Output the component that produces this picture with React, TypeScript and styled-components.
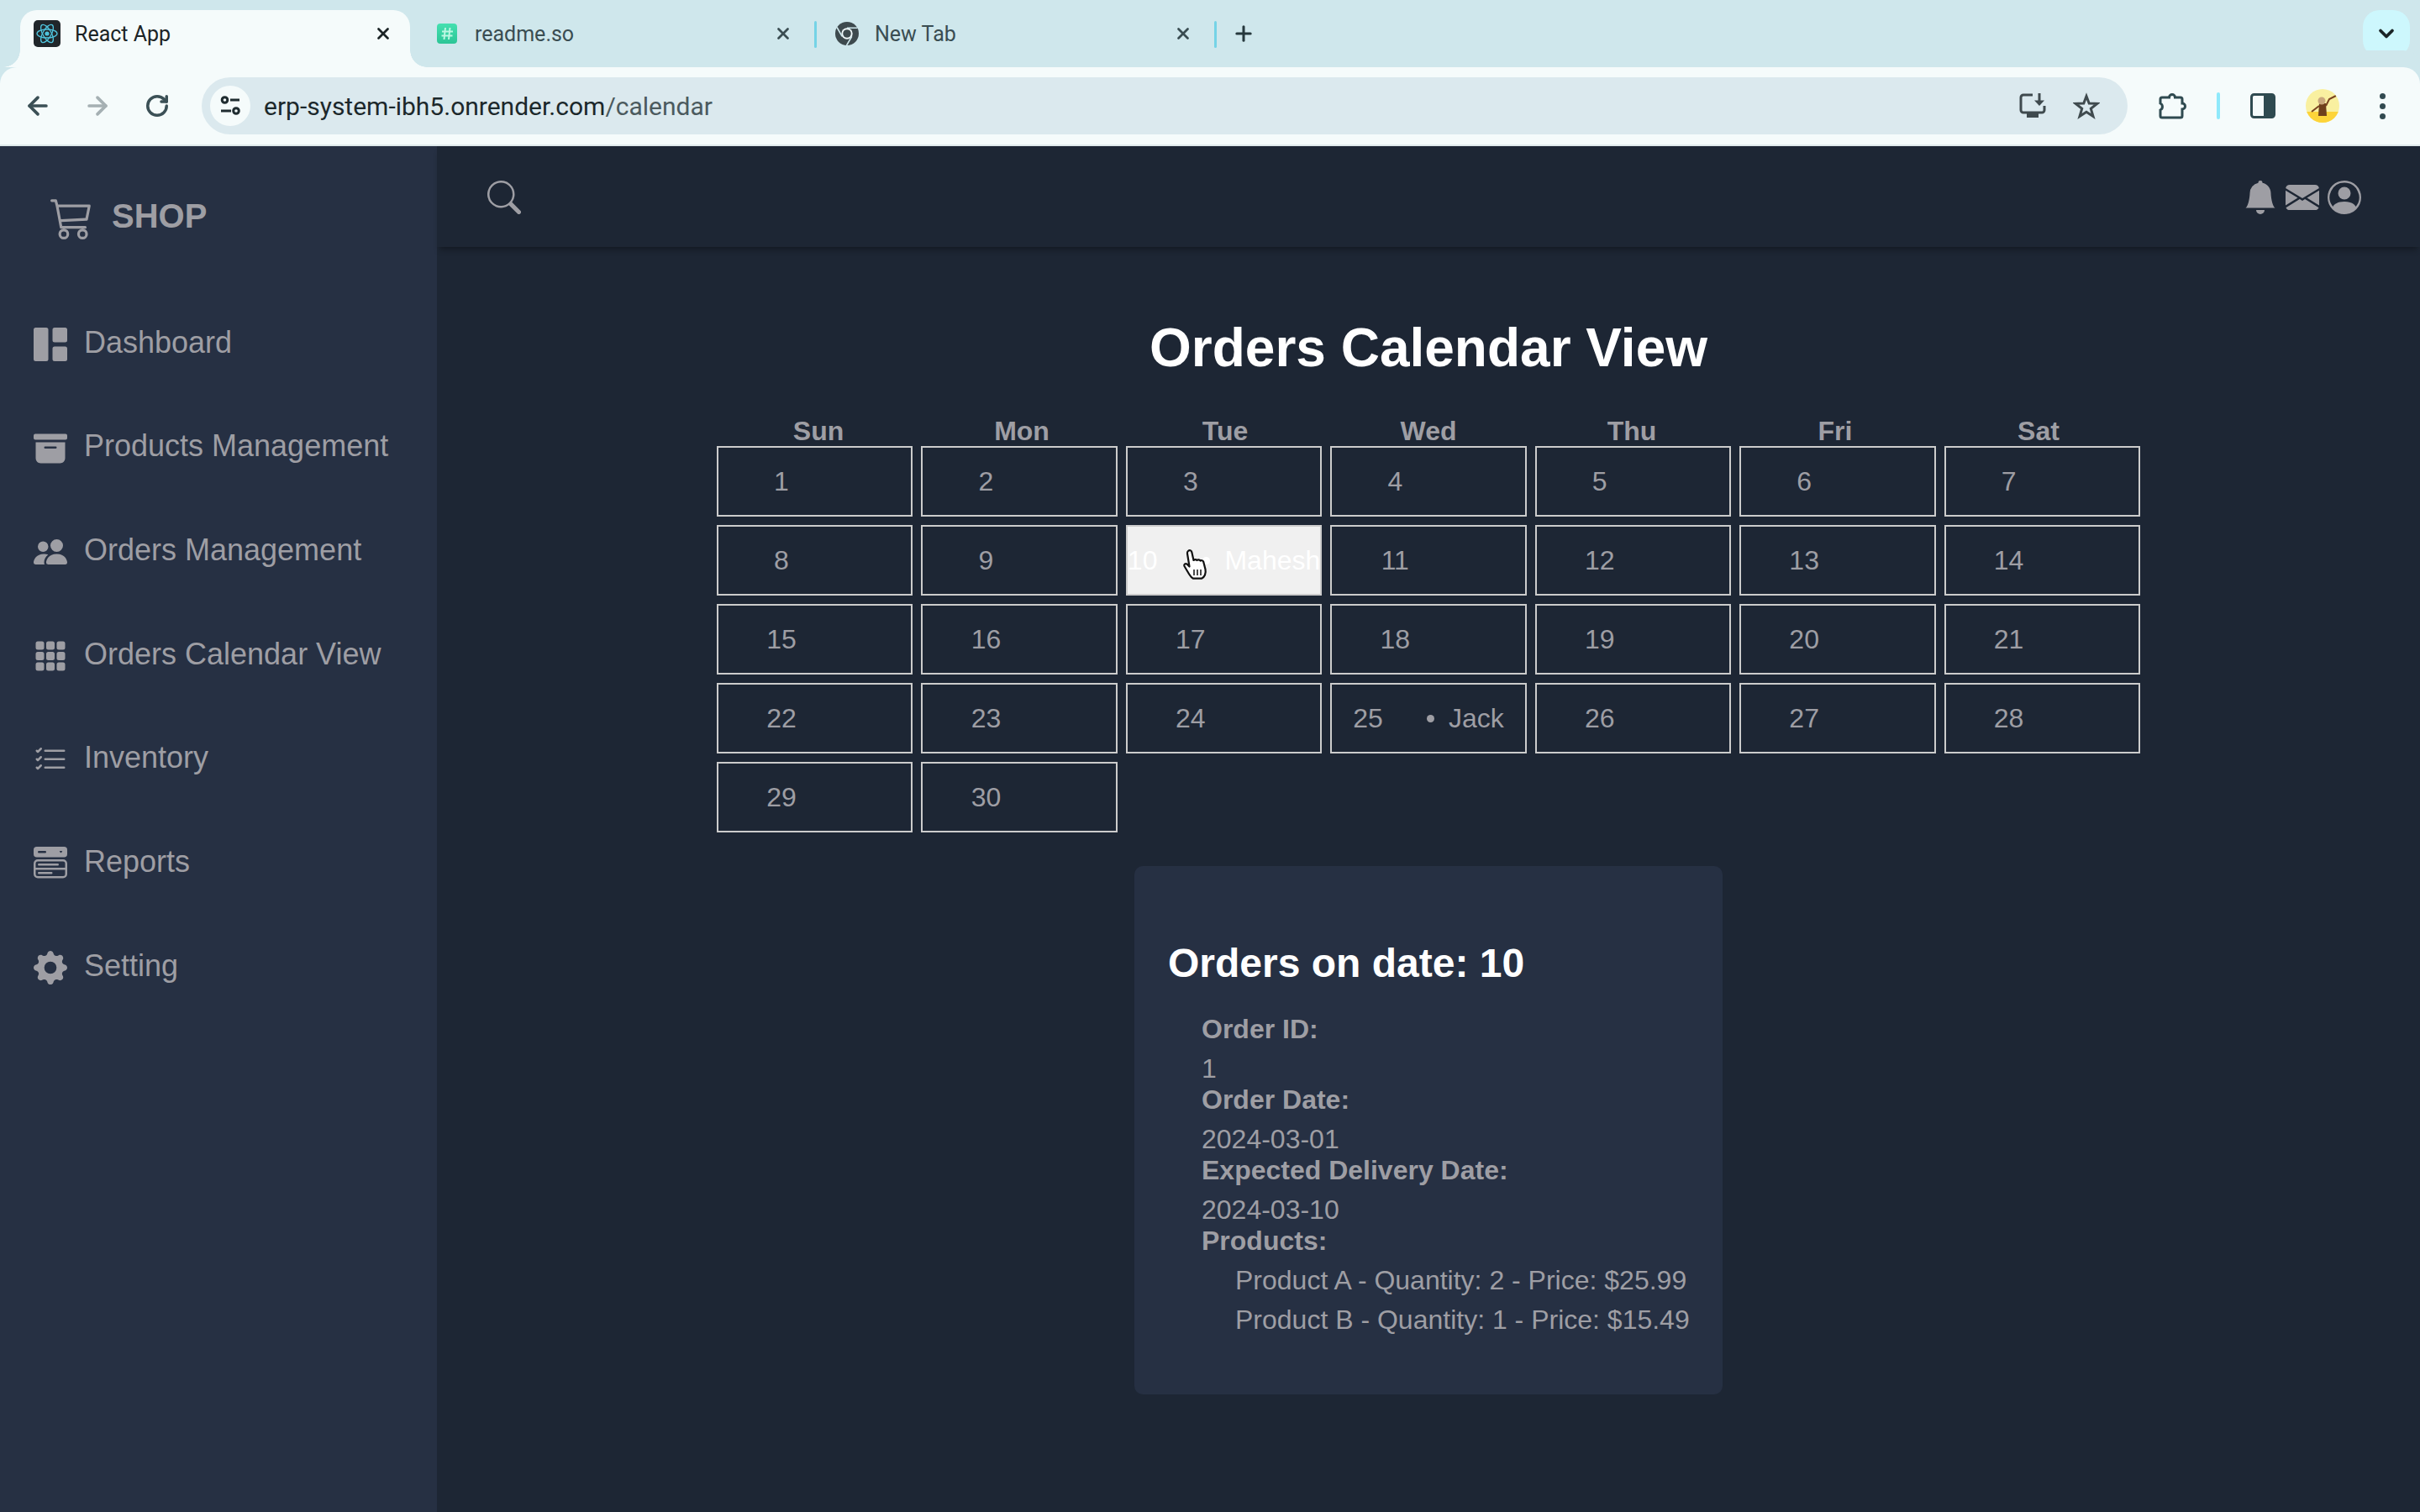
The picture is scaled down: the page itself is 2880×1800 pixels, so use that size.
import React from "react";
import styled, { createGlobalStyle } from "styled-components";
import { ArrowLeft, ArrowRight, RotateCw, X, Plus, ChevronDown } from "lucide-react";
import {
  BsCart3, BsGrid1X2Fill, BsFillArchiveFill, BsPeopleFill, BsFillGrid3X3GapFill,
  BsListCheck, BsMenuButtonWideFill, BsFillGearFill, BsSearch, BsFillBellFill,
  BsFillEnvelopeFill, BsPersonCircle,
} from "react-icons/bs";

const GlobalStyle = createGlobalStyle`
  html, body { margin: 0; padding: 0; background: #1d2634; }
  body { font-family: "Liberation Sans", Arial, sans-serif; color: #9e9ea4; }
  * { box-sizing: border-box; }
`;

const Shell = styled.div`
  width: 2880px;
  height: 1800px;
  display: flex;
  flex-direction: column;
  overflow: hidden;
`;

/* ---------- browser chrome ---------- */
const TabStrip = styled.div`
  height: 80px;
  flex: none;
  display: flex;
  padding: 12px 12px 0 24px;
  background: #cfe7ec;
`;
const Tab = styled.div<{ $active?: boolean }>`
  position: relative;
  width: 464px;
  flex: none;
  display: flex;
  align-items: center;
  padding: 0 0 12px 16px;
  border-radius: 20px 20px 0 0;
  font-family: Roboto, "Liberation Sans", sans-serif;
  font-size: 25px;
  color: ${(p) => (p.$active ? "#1b2426" : "#3a4d52")};
  background: ${(p) => (p.$active ? "#f5fbfb" : "transparent")};
  ${(p) =>
    p.$active &&
    `
    &::before, &::after {
      content: "";
      position: absolute;
      bottom: 0;
      width: 20px;
      height: 20px;
    }
    &::before { left: -20px; background: radial-gradient(circle at 0 0, #cfe7ec 19.5px, #f5fbfb 20px); }
    &::after { right: -20px; background: radial-gradient(circle at 100% 0, #cfe7ec 19.5px, #f5fbfb 20px); }
  `}
`;
const Favicon = styled.span`
  width: 32px;
  height: 32px;
  flex: none;
  display: flex;
  align-items: center;
  justify-content: center;
`;
const TabTitle = styled.span`
  margin-left: 17px;
  flex: 1;
`;
const TabClose = styled.span`
  position: absolute;
  left: 418px;
  top: 14px;
  width: 28px;
  height: 28px;
  display: flex;
  align-items: center;
  justify-content: center;
`;
const TabGap = styled.div<{ $bar?: boolean }>`
  width: 12px;
  flex: none;
  display: flex;
  justify-content: center;
  padding-top: 13px;
  &::before {
    content: "";
    display: ${(p) => (p.$bar ? "block" : "none")};
    width: 3px;
    height: 32px;
    border-radius: 2px;
    background: #75d3e6;
  }
`;
const NewTab = styled.span`
  width: 28px;
  height: 56px;
  margin-left: 14px;
  display: flex;
  align-items: center;
  justify-content: center;
  color: #26383d;
`;
const TabSearch = styled.span`
  margin-left: auto;
  width: 56px;
  height: 56px;
  border-radius: 20px;
  background: #cdf7fd;
  display: flex;
  align-items: center;
  justify-content: center;
  color: #1b2426;
`;
const Toolbar = styled.div`
  height: 94px;
  flex: none;
  display: flex;
  align-items: center;
  padding: 12px 0 12px 25px;
  background: #f5fbfb;
  border-bottom: 2px solid #dfe9eb;
  border-radius: 20px 20px 0 0;
  box-shadow: 0 -20px 0 0 #cfe7ec;
`;
const NavButton = styled.span<{ $disabled?: boolean }>`
  width: 40px;
  height: 40px;
  margin-right: 31px;
  display: flex;
  align-items: center;
  justify-content: center;
  color: ${(p) => (p.$disabled ? "#a5b0b3" : "#3b5056")};
`;
const Omnibox = styled.div`
  width: 2292px;
  height: 68px;
  flex: none;
  margin-left: 2px;
  display: flex;
  align-items: center;
  padding: 0 33px 0 10px;
  border-radius: 34px;
  background: #dbe9ee;
`;
const SiteInfo = styled.span`
  width: 48px;
  height: 48px;
  flex: none;
  border-radius: 50%;
  background: #f5fbfb;
  display: flex;
  align-items: center;
  justify-content: center;
`;
const Url = styled.span`
  margin-left: 16px;
  flex: 1;
  font-family: Roboto, "Liberation Sans", sans-serif;
  font-size: 30px;
  color: #1c282b;
  span { color: #4b5a5e; }
`;
const OmniIcons = styled.span`
  display: flex;
  align-items: center;
  gap: 32px;
`;
const ToolbarEnd = styled.div`
  display: flex;
  align-items: center;
  gap: 36px;
  padding-left: 36px;
`;
const ToolbarRule = styled.span`
  width: 4px;
  height: 32px;
  border-radius: 2px;
  background: #8ee9fb;
`;
const Dots = styled.span`
  margin-left: 12px;
  display: flex;
  flex-direction: column;
  gap: 5px;
  i {
    display: block;
    width: 7px;
    height: 7px;
    border-radius: 50%;
    background: #324a50;
  }
`;

/* ---------- page ---------- */
const Page = styled.div`
  flex: 1;
  min-height: 0;
  display: grid;
  grid-template-columns: 520px 1fr;
`;
const Sidebar = styled.aside`
  background: #263043;
`;
const Brand = styled.div`
  height: 172.5px;
  padding: 60px 0 0 60px;
  display: flex;
  align-items: flex-start;
  gap: 22px;
  font-size: 40px;
  font-weight: 700;
  line-height: 46px;
`;
const NavList = styled.ul`
  list-style: none;
  margin: 0;
  padding: 0;
`;
const NavItem = styled.li`
  height: 123.7px;
  padding: 40px 0 0 40px;
  font-size: 36px;
  line-height: 41px;
  white-space: nowrap;
  svg {
    vertical-align: middle;
    margin-right: 20px;
  }
`;
const Main = styled.main`
  min-width: 0;
  display: flex;
  flex-direction: column;
  align-items: center;
`;
const TopBar = styled.header`
  align-self: stretch;
  height: 120px;
  flex: none;
  display: flex;
  align-items: center;
  justify-content: space-between;
  padding: 2px 70px 0 60px;
  box-shadow: 0 6px 7px -3px rgba(0, 0, 0, 0.35);
`;
const TopIcons = styled.div`
  display: flex;
  gap: 10px;
`;
const Title = styled.h1`
  margin: 84px 0 46px;
  font-size: 64px;
  line-height: 72px;
  font-weight: 700;
  color: #fff;
`;
const WeekRow = styled.div`
  width: 1694px;
  display: grid;
  grid-template-columns: repeat(7, 1fr);
  text-align: center;
  font-size: 32px;
  font-weight: 700;
  line-height: 35px;
`;
const DayGrid = styled.div`
  width: 1694px;
  display: grid;
  grid-template-columns: repeat(7, 1fr);
  grid-auto-rows: 84px;
  gap: 10px;
`;
const DayCell = styled.div<{ $selected?: boolean; $inset?: number; $hasOrder?: boolean }>`
  display: flex;
  align-items: center;
  justify-content: ${(p) => (p.$hasOrder ? "space-between" : "flex-start")};
  padding: 0 ${(p) => (p.$hasOrder ? p.$inset ?? 0 : 0)}px 0 ${(p) => p.$inset ?? 53}px;
  border: 2px solid #ccc;
  font-size: 32px;
  white-space: nowrap;
  background: ${(p) => (p.$selected ? "#f0f0f0" : "transparent")};
  color: ${(p) => (p.$selected ? "#fff" : "#9e9ea4")};
`;
const DayNumber = styled.span<{ $plain?: boolean }>`
  min-width: ${(p) => (p.$plain ? "44px" : "0")};
  text-align: center;
`;
const OrderTag = styled.span`
  display: flex;
  align-items: center;
  gap: 17px;
  &::before {
    content: "";
    width: 9px;
    height: 9px;
    border-radius: 50%;
    background: currentColor;
  }
`;
const CursorMark = styled.svg`
  position: absolute;
  left: 1406px;
  top: 653px;
`;
const Panel = styled.section`
  width: 700px;
  height: 629px;
  margin-top: 40px;
  padding: 88px 40px 0;
  border-radius: 10px;
  background: #263043;
  font-size: 32px;
  line-height: 37px;
`;
const PanelTitle = styled.h3`
  margin: 0 0 33px;
  font-size: 48px;
  line-height: 55px;
  font-weight: 700;
  color: #fff;
`;
const Details = styled.div`
  padding-left: 40px;
`;
const Label = styled.div`
  font-weight: 700;
  margin-bottom: 10px;
`;
const ProductList = styled.div`
  padding-left: 40px;
  display: flex;
  flex-direction: column;
  gap: 10px;
  white-space: nowrap;
`;

const nav = [
  [BsGrid1X2Fill, "Dashboard"],
  [BsFillArchiveFill, "Products Management"],
  [BsPeopleFill, "Orders Management"],
  [BsFillGrid3X3GapFill, "Orders Calendar View"],
  [BsListCheck, "Inventory"],
  [BsMenuButtonWideFill, "Reports"],
  [BsFillGearFill, "Setting"],
] as const;

const week = ["Sun", "Mon", "Tue", "Wed", "Thu", "Fri", "Sat"];
const orders: Record<number, { name: string; inset: number }> = {
  10: { name: "Mahesh", inset: 0 },
  25: { name: "Jack", inset: 25 },
};
const details = [
  ["Order ID:", "1"],
  ["Order Date:", "2024-03-01"],
  ["Expected Delivery Date:", "2024-03-10"],
];

const ReactIcon = () => (
  <svg width="32" height="32" viewBox="0 0 32 32">
    <rect width="32" height="32" rx="5" fill="#20262a" />
    <g fill="none" stroke="#4fc3dc" strokeWidth="1.3">
      <ellipse cx="16" cy="16" rx="12" ry="5" />
      <ellipse cx="16" cy="16" rx="12" ry="5" transform="rotate(60 16 16)" />
      <ellipse cx="16" cy="16" rx="12" ry="5" transform="rotate(120 16 16)" />
    </g>
    <circle cx="16" cy="16" r="2.6" fill="#4fc3dc" />
  </svg>
);
const ReadmeIcon = () => (
  <svg width="24" height="24" viewBox="0 0 24 24">
    <defs>
      <linearGradient id="rd" x1="0" y1="0" x2="0" y2="1">
        <stop offset="0" stopColor="#45e0b0" />
        <stop offset="1" stopColor="#2cc596" />
      </linearGradient>
    </defs>
    <rect width="24" height="24" rx="4" fill="url(#rd)" />
    <g stroke="#bdf7e2" strokeWidth="2" fill="none">
      <path d="M10 5 8.500 19M15.500 5 14 19M6 9.500h13M5.500 14.500h13" />
    </g>
  </svg>
);
const ChromeIcon = () => (
  <svg width="30" height="30" viewBox="0 0 30 30">
    <circle cx="15" cy="15" r="14" fill="#3e4a4e" />
    <circle cx="15" cy="15" r="6.700" fill="#f0f8f9" />
    <circle cx="15" cy="15" r="4.800" fill="#3e4a4e" />
    <path d="M15 8.300h12.500M9.200 18.300 3 7.500M20.800 18.300 14.500 29" stroke="#cfe7ec" strokeWidth="1.600" fill="none" />
  </svg>
);
const TuneIcon = () => (
  <svg width="26" height="26" viewBox="0 0 26 26" fill="none" stroke="#1f2c30" strokeWidth="3">
    <circle cx="6.500" cy="6" r="3.300" />
    <path d="M13 6h11M2 19h12" />
    <circle cx="20" cy="19" r="3.300" />
  </svg>
);
const InstallIcon = () => (
  <svg width="32" height="30" viewBox="0 0 32 30" fill="none">
    <path d="M16 2H5a3 3 0 0 0-3 3v15a3 3 0 0 0 3 3h22a3 3 0 0 0 3-3v-5" stroke="#3f4a4e" strokeWidth="3" />
    <rect x="9" y="23" width="14" height="6" fill="#3f4a4e" />
    <path d="M24 0v11" stroke="#3f4a4e" strokeWidth="3" />
    <path d="M18 8.500h12L24 15z" fill="#3f4a4e" />
  </svg>
);
const StarIcon = () => (
  <svg width="32" height="32" viewBox="0 0 32 32">
    <path d="M16 4.500 19.200 13 29 13.300 21.300 19.300 24 28.500 16 23.200 8 28.500 10.700 19.300 3 13.300 12.800 13z" fill="none" stroke="#3f4a4e" strokeWidth="3" strokeLinejoin="miter" />
  </svg>
);
const PuzzleIcon = () => (
  <svg width="34" height="34" viewBox="0 0 34 34">
    <path
      d="M5 7h8.500a3.500 3.500 0 0 1 7 0H27a2 2 0 0 1 2 2v5a3.500 3.500 0 0 1 0 7v8a2 2 0 0 1-2 2H5a2 2 0 0 1-2-2v-7a4.500 4.500 0 0 0 0-8V9a2 2 0 0 1 2-2z"
      fill="none"
      stroke="#2f4a50"
      strokeWidth="3"
    />
  </svg>
);
const SidePanelIcon = () => (
  <svg width="30" height="30" viewBox="0 0 30 30">
    <rect x="1.500" y="1.500" width="27" height="27" rx="3" fill="#f5fbfb" stroke="#2f4a50" strokeWidth="3" />
    <path d="M16 1.500h9.500a3 3 0 0 1 3 3v21a3 3 0 0 1-3 3H16z" fill="#2f4a50" />
  </svg>
);
const AvatarIcon = () => (
  <svg width="40" height="40" viewBox="0 0 40 40">
    <clipPath id="av"><circle cx="20" cy="20" r="20" /></clipPath>
    <g clipPath="url(#av)">
      <rect width="40" height="40" fill="#f9f0a0" />
      <rect y="27" width="40" height="13" fill="#fdd43a" />
      <path d="M16 17h8l1 15h-10z" fill="#6f3f1c" />
      <path d="M7 27 16 20M24 20 28 12 36 8" stroke="#7a4420" strokeWidth="2" fill="none" />
      <circle cx="19" cy="14" r="4.500" fill="#c9a77c" />
    </g>
  </svg>
);
const HandCursor = () => (
  <CursorMark width="36" height="38" viewBox="0 0 36 38">
    <path
      d="M8 3c1.700-1.500 3.800-.8 4.300 1.200L14.500 14c1-1.200 3-1.200 4 0 1-1 3-1 4 .5 1.200-.8 3-.4 3.700 1.200l2.300 9c1 5-1 9.500-4.500 11H14c-2-1-3.500-3-5-5.500L3.500 21c-1-2 1-3.500 3-2.500l3 3L7 6c-.2-1.200.2-2.300 1-3z"
      fill="#fff"
      stroke="#111"
      strokeWidth="2.200"
      strokeLinejoin="round"
    />
    <path d="M15 25v7M19 25v7M23 25v7" stroke="#111" strokeWidth="1.500" />
  </CursorMark>
);

export default function App() {
  const days = Array.from({ length: 30 }, (_, i) => i + 1);
  return (
    <Shell>
      <GlobalStyle />
      <TabStrip>
        <Tab $active>
          <Favicon><ReactIcon /></Favicon>
          <TabTitle>React App</TabTitle>
          <TabClose><X size={22} strokeWidth={3} color="#1b2426" /></TabClose>
        </Tab>
        <TabGap />
        <Tab>
          <Favicon><ReadmeIcon /></Favicon>
          <TabTitle>readme.so</TabTitle>
          <TabClose><X size={22} strokeWidth={3} color="#3a4d52" /></TabClose>
        </Tab>
        <TabGap $bar />
        <Tab>
          <Favicon><ChromeIcon /></Favicon>
          <TabTitle>New Tab</TabTitle>
          <TabClose><X size={22} strokeWidth={3} color="#3a4d52" /></TabClose>
        </Tab>
        <TabGap $bar />
        <NewTab><Plus size={30} strokeWidth={2.6} /></NewTab>
        <TabSearch><ChevronDown size={28} strokeWidth={3.2} /></TabSearch>
      </TabStrip>
      <Toolbar>
        <NavButton><ArrowLeft size={34} strokeWidth={2.6} /></NavButton>
        <NavButton $disabled><ArrowRight size={34} strokeWidth={2.6} /></NavButton>
        <NavButton><RotateCw size={30} strokeWidth={2.8} /></NavButton>
        <Omnibox>
          <SiteInfo><TuneIcon /></SiteInfo>
          <Url>erp-system-ibh5.onrender.com<span>/calendar</span></Url>
          <OmniIcons>
            <InstallIcon />
            <StarIcon />
          </OmniIcons>
        </Omnibox>
        <ToolbarEnd>
          <PuzzleIcon />
          <ToolbarRule />
          <SidePanelIcon />
          <AvatarIcon />
          <Dots><i /><i /><i /></Dots>
        </ToolbarEnd>
      </Toolbar>
      <Page>
        <Sidebar>
          <Brand>
            <BsCart3 size={51} />
            <span>SHOP</span>
          </Brand>
          <NavList>
            {nav.map(([Icon, label]) => (
              <NavItem key={label}>
                <Icon size={40} />
                {label}
              </NavItem>
            ))}
          </NavList>
        </Sidebar>
        <Main>
          <TopBar>
            <BsSearch size={40} />
            <TopIcons>
              <BsFillBellFill size={40} />
              <BsFillEnvelopeFill size={40} />
              <BsPersonCircle size={40} />
            </TopIcons>
          </TopBar>
          <Title>Orders Calendar View</Title>
          <WeekRow>
            {week.map((d) => <div key={d}>{d}</div>)}
          </WeekRow>
          <DayGrid>
            {days.map((d) => {
              const order = orders[d];
              return order ? (
                <DayCell key={d} $hasOrder $inset={order.inset} $selected={d === 10}>
                  <DayNumber>{d}</DayNumber>
                  <OrderTag>{order.name}</OrderTag>
                </DayCell>
              ) : (
                <DayCell key={d}>
                  <DayNumber $plain>{d}</DayNumber>
                </DayCell>
              );
            })}
          </DayGrid>
          <Panel>
            <PanelTitle>Orders on date: 10</PanelTitle>
            <Details>
              {details.map(([k, v]) => (
                <React.Fragment key={k}>
                  <Label>{k}</Label>
                  <div>{v}</div>
                </React.Fragment>
              ))}
              <Label>Products:</Label>
              <ProductList>
                <div>Product A - Quantity: 2 - Price: $25.99</div>
                <div>Product B - Quantity: 1 - Price: $15.49</div>
              </ProductList>
            </Details>
          </Panel>
        </Main>
      </Page>
      <HandCursor />
    </Shell>
  );
}
